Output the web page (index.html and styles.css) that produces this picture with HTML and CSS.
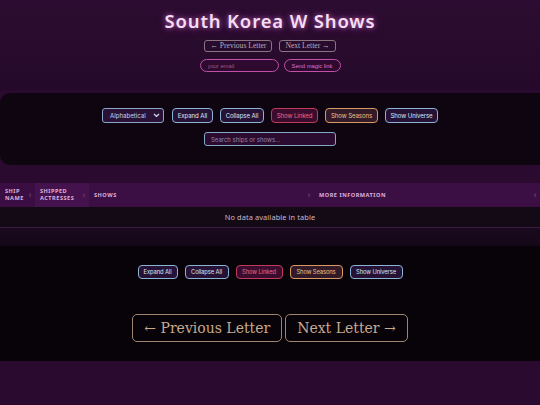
FILE: index.html
```html
<!DOCTYPE html>
<html lang="en">
<head>
<meta charset="utf-8">
<title>South Korea W Shows</title>
<link rel="stylesheet" href="styles.css">
</head>
<body>
<header class="hero">
  <h1 class="title">South Korea W Shows</h1>
  <nav class="letters">
    <a class="letter-btn">← Previous Letter</a>
    <a class="letter-btn">Next Letter →</a>
  </nav>
  <form class="magic">
    <input class="magic-input" type="text" placeholder="your email">
    <button class="magic-btn" type="button">Send magic link</button>
  </form>
</header>

<section class="panel">
  <div class="controls">
    <div class="select"><span>Alphabetical</span><svg class="chev" width="7" height="5" viewBox="0 0 7 5"><path d="M1 1l2.5 2.5L6 1" fill="none" stroke="#d8dff0" stroke-width="1.2"/></svg></div>
    <button class="ctl blue" type="button">Expand All</button>
    <button class="ctl blue" type="button">Collapse All</button>
    <button class="ctl red" type="button">Show Linked</button>
    <button class="ctl orange" type="button">Show Seasons</button>
    <button class="ctl blue" type="button">Show Universe</button>
  </div>
  <div class="search-row">
    <input class="search" type="text" placeholder="Search ships or shows...">
  </div>
</section>

<div class="table-area">
  <table class="data">
    <thead>
      <tr>
        <th class="c1">Ship<br>Name<span class="sort">⬍</span></th>
        <th class="c2">Shipped<br>Actresses<span class="sort">⬍</span></th>
        <th class="c3">Shows<span class="sort">⬍</span></th>
        <th class="c4">More Information<span class="sort">⬍</span></th>
      </tr>
    </thead>
    <tbody>
      <tr><td colspan="4" class="empty">No data available in table</td></tr>
    </tbody>
  </table>
  <div class="table-foot"></div>
</div>

<section class="bottom">
  <div class="controls small">
    <button class="ctl blue" type="button">Expand All</button>
    <button class="ctl blue" type="button">Collapse All</button>
    <button class="ctl red" type="button">Show Linked</button>
    <button class="ctl orange" type="button">Show Seasons</button>
    <button class="ctl blue" type="button">Show Universe</button>
  </div>
  <nav class="big-letters">
    <a class="big-btn">← Previous Letter</a>
    <a class="big-btn">Next Letter →</a>
  </nav>
</section>
</body>
</html>
```

FILE: styles.css
```css
* { box-sizing: border-box; }
html, body { margin: 0; padding: 0; }
body {
  background: #2a0b2f;
  font-family: "Noto Sans", sans-serif;
  color: #e8d8ec;
  width: 540px;
  height: 405px;
  overflow: hidden;
}

.hero {
  height: 90px;
  background: linear-gradient(#2c0d31, #25092a);
  display: flex;
  flex-direction: column;
  align-items: center;
  padding-top: 8px;
}
.title {
  margin: 0;
  font-family: "Noto Sans", sans-serif;
  font-weight: 600;
  font-size: 18.5px;
  letter-spacing: 0.85px;
  line-height: 26px;
  color: #f5def3;
  text-shadow: 0 0 5px rgba(240, 130, 230, 0.65), 0 0 11px rgba(220, 90, 210, 0.3);
}
.letters {
  display: flex;
  gap: 7px;
  margin-top: 6px;
}
.letter-btn {
  font-family: "Liberation Serif", serif;
  font-size: 7.6px;
  color: #bcaab4;
  border: 1px solid #8a7482;
  border-radius: 3px;
  height: 12px;
  line-height: 10px;
  padding: 0 5px;
}
.magic {
  display: flex;
  gap: 5px;
  margin-top: 7px;
}
.magic-input {
  width: 79px;
  height: 13px;
  border: 1px solid #c050a8;
  border-radius: 7px;
  background: #2e0a2f;
  font-family: "Liberation Sans", sans-serif;
  font-size: 5.8px;
  color: #c080b0;
  padding: 0 7px;
  outline: none;
}
.magic-input::placeholder { color: #9a5a8c; }
.magic-btn {
  height: 13px;
  width: 57px;
  border: 1px solid #c050a8;
  border-radius: 7px;
  background: #2e0a2f;
  font-family: "Liberation Sans", sans-serif;
  font-size: 5.8px;
  color: #e070c8;
  padding: 0;
}

.panel {
  margin-top: 3px;
  height: 72px;
  background: #0f0511;
  border-radius: 10px 0 0 10px;
  padding-top: 15px;
}
.controls {
  display: flex;
  justify-content: center;
  gap: 7px;
  height: 15px;
}
.select {
  width: 62px;
  height: 15px;
  border: 1px solid #8aa6c8;
  border-radius: 3px;
  background: #2a1236;
  display: flex;
  align-items: center;
  justify-content: space-between;
  padding: 0 3px 0 7px;
  font-family: "Inter", sans-serif;
  font-size: 6.1px;
  color: #c8d2e6;
  margin-right: 1px;
}
.ctl {
  height: 15px;
  border-radius: 4px;
  font-family: "Inter", sans-serif;
  font-size: 6.1px;
  letter-spacing: -0.1px;
  padding: 0;
  border: 1px solid;
}
.ctl.blue { border-color: #8cb2d6; background: #261235; color: #dce4f2; }
.ctl.red { border-color: #c03a5a; background: #3a0c2e; color: #e86a88; }
.ctl.orange { border-color: #d89a62; background: #321a28; color: #f0c086; }
.controls .ctl:nth-child(2) { width: 41px; }
.controls .ctl:nth-child(3) { width: 44px; }
.controls .ctl:nth-child(4) { width: 47px; }
.controls .ctl:nth-child(5) { width: 53px; }
.controls .ctl:nth-child(6) { width: 53px; }

.search-row {
  display: flex;
  justify-content: center;
  margin-top: 9px;
}
.search {
  width: 132px;
  height: 14px;
  border: 1px solid #86a8c8;
  border-radius: 3px;
  background: #2a0c30;
  font-family: "Inter", sans-serif;
  font-size: 6px;
  padding: 0 6px;
  outline: none;
  color: #c8b0d0;
}
.search::placeholder { color: #9a82a8; }

.table-area {
  margin-top: 18px;
  background: #120814;
}
.data {
  width: 100%;
  border-collapse: collapse;
  font-family: "Noto Sans", sans-serif;
}
.data th {
  height: 24px;
  background: #3c0f44;
  text-align: left;
  font-size: 5.6px;
  font-weight: bold;
  text-transform: uppercase;
  letter-spacing: 0.5px;
  line-height: 7px;
  color: #deb0dc;
  padding: 0 5px;
  position: relative;
}
.data th.c1 { width: 35px; background: #3a0e42; }
.data th.c2 { width: 54px; background: #44124c; }
.data th.c3 { width: 225px; }
.sort {
  position: absolute;
  right: 3px;
  top: 9px;
  font-size: 4.5px;
  color: #5e3466;
  font-weight: normal;
}
.data td.empty {
  height: 20px;
  text-align: center;
  font-size: 7.4px;
  letter-spacing: 0.1px;
  color: #c8b8cc;
  border-bottom: 1px solid #3a1a40;
  background: #140a16;
}
.table-foot {
  height: 18px;
  background: linear-gradient(#1a0a1e, #140818);
}

.bottom {
  height: 115px;
  background: #070308;
  padding-top: 19px;
}
.controls.small { gap: 7px; height: 14px; }
.controls.small .ctl { height: 14px; font-size: 5.8px; }
.controls.small .ctl:nth-child(1) { width: 40px; }
.controls.small .ctl:nth-child(2) { width: 44px; }
.controls.small .ctl:nth-child(3) { width: 47px; }
.controls.small .ctl:nth-child(4) { width: 53px; }
.controls.small .ctl:nth-child(5) { width: 53px; }

.big-letters {
  display: flex;
  justify-content: center;
  gap: 3px;
  margin-top: 35px;
}
.big-btn {
  font-family: "DejaVu Serif", "Liberation Serif", serif;
  font-size: 14px;
  color: #c8aa90;
  border: 1px solid #a08470;
  border-radius: 5px;
  height: 28px;
  line-height: 26px;
  padding: 0 11px;
}
```
